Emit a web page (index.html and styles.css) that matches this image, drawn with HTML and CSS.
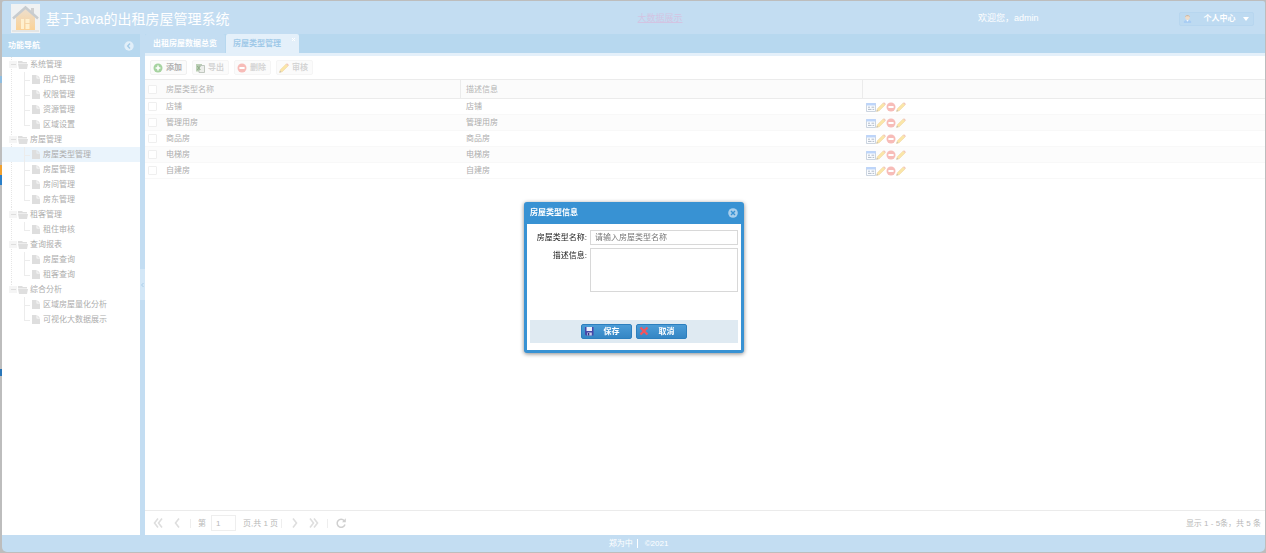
FILE: index.html
```html
<!DOCTYPE html>
<html lang="zh-CN">
<head>
<meta charset="utf-8">
<title>基于Java的出租房屋管理系统</title>
<link rel="stylesheet" href="styles.css">
</head>
<body>
<svg class="defs" aria-hidden="true">
  <defs>
    <symbol id="folder" viewBox="0 0 10 8"><path d="M0 0h4l1 1h4v1.500H0z" fill="#dedede"/><path d="M0 3h10L9 8H1z" fill="#dfdfdf"/></symbol>
    <symbol id="file" viewBox="0 0 8 9"><path d="M0 0h4.600v3.400H8V9H0z" fill="#dedede"/><path d="M5.400.2L7.900 2.700H5.400z" fill="#dedede"/></symbol>
    <symbol id="add" viewBox="0 0 10 10"><circle cx="5" cy="5" r="4.500" fill="#a6d3a0"/><path d="M5 2.600v4.800M2.600 5h4.800" stroke="#fff" stroke-width="1.500"/></symbol>
    <symbol id="remove" viewBox="0 0 10 10"><circle cx="5" cy="5" r="4.500" fill="#f7bcb8"/><path d="M2.400 5h5.200" stroke="#fff" stroke-width="1.800"/></symbol>
    <symbol id="pencil" viewBox="0 0 10 10"><path d="M.5 9.500L1.300 6.800 7.200.9l2 2-6 5.900z" fill="#fbe6a8" stroke="#ecd3a0" stroke-width=".5"/><path d="M7.200.9L8 .2l1.900 1.900-.8.800z" fill="#f3c4b8"/><path d="M.5 9.500l.5-1.700L2.200 9z" fill="#bbb"/></symbol>
    <symbol id="export" viewBox="0 0 10 10"><path d="M1 1h6v7.500H1z" fill="#bcd0b6"/><path d="M4 2.500h5.500v7H4z" fill="#eceeea" stroke="#b4bcb2" stroke-width=".8"/><path d="M2.300 3l3 4M5.300 3l-3 4" stroke="#93b08b" stroke-width="1.200"/></symbol>
    <symbol id="detail" viewBox="0 0 10 10"><path d="M.5 1.500h9v8h-9z" fill="#fafcff" stroke="#bfcad8" stroke-width=".8"/><path d="M.3 1h9.400v2.400H.3z" fill="#bdd5fa"/><path d="M2 5.200h2M2 7.400h3.500M5.500 5.200h2.700M6.500 7.400h1.700" stroke="#a9b3c2" stroke-width=".9"/></symbol>
    <symbol id="left" viewBox="0 0 10 12"><path d="M7 1.500L3.500 6 7 10.500" fill="none" stroke="#dedede" stroke-width="1.600"/></symbol>
    <symbol id="dleft" viewBox="0 0 10 12"><path d="M5 1.500L1.500 6 5 10.500M9 1.500L5.500 6 9 10.500" fill="none" stroke="#dedede" stroke-width="1.600"/></symbol>
    <symbol id="right" viewBox="0 0 10 12"><path d="M3 1.500L6.500 6 3 10.500" fill="none" stroke="#dedede" stroke-width="1.600"/></symbol>
    <symbol id="dright" viewBox="0 0 10 12"><path d="M1 1.500L4.500 6 1 10.500M5 1.500L8.500 6 5 10.500" fill="none" stroke="#dedede" stroke-width="1.600"/></symbol>
  </defs>
</svg>
<div class="app">
  <header class="top">
    <div class="brand">
      <svg class="logo" viewBox="0 0 29 29"><defs><linearGradient id="wall" x2="0" y2="1"><stop stop-color="#ecdfd0"/><stop offset="1" stop-color="#fbd296"/></linearGradient></defs><path d="M0 0h29v29H0z" fill="#f0f2f3"/><path d="M1 26h27v2H1z" fill="#e3e5e5"/><path d="M5 12L14.500 4 24 12v14H5z" fill="url(#wall)"/><path d="M20 4h3v6l-3-3z" fill="#cfd0d1"/><path d="M2 14.500L14.500 3.500 27 14.500" fill="none" stroke="#c8cccf" stroke-width="2.500"/><path d="M10 15h3v10h-3zM14.500 15h4v4h-4zM14.500 20h4v5h-4z" fill="#fff0ce"/></svg>
      <h1>基于Java的出租房屋管理系统</h1>
    </div>
    <a class="bigdata" href="#">大数据展示</a>
    <span class="welcome">欢迎您，admin</span>
    <button class="account" type="button"><svg viewBox="0 0 10 10"><path d="M1 10V8l2.500-1.500h3L9 8v2z" fill="#a9cdf3"/><path d="M3.500 6.500h3L5 8.500z" fill="#f4f8fc"/><circle cx="5" cy="4" r="2.600" fill="#efdcca"/><path d="M2.200 4C2 0 8 0 7.800 4L6.500 2.500h-3z" fill="#cdb8a4"/></svg><span>个人中心</span><i class="caret"></i></button>
  </header>
  <aside class="west">
    <div class="panel-head"><span>功能导航</span><button type="button" aria-label="收起"><svg viewBox="0 0 10 10"><circle cx="5" cy="5" r="4.700" fill="#e1eff9"/><path d="M6 2.600L3.700 5 6 7.400" fill="none" stroke="#a3cbe8" stroke-width="1.400"/></svg></button></div>
    <ul class="tree">
      <li><div class="node"><i class="toggle"></i><svg><use href="#folder"/></svg>系统管理</div>
        <ul><li><svg><use href="#file"/></svg>用户管理</li><li><svg><use href="#file"/></svg>权限管理</li><li><svg><use href="#file"/></svg>资源管理</li><li><svg><use href="#file"/></svg>区域设置</li></ul></li>
      <li><div class="node"><i class="toggle"></i><svg><use href="#folder"/></svg>房屋管理</div>
        <ul><li class="selected"><svg><use href="#file"/></svg>房屋类型管理</li><li><svg><use href="#file"/></svg>房屋管理</li><li><svg><use href="#file"/></svg>房间管理</li><li><svg><use href="#file"/></svg>房东管理</li></ul></li>
      <li><div class="node"><i class="toggle"></i><svg><use href="#folder"/></svg>租客管理</div>
        <ul><li><svg><use href="#file"/></svg>租住审核</li></ul></li>
      <li><div class="node"><i class="toggle"></i><svg><use href="#folder"/></svg>查询报表</div>
        <ul><li><svg><use href="#file"/></svg>房屋查询</li><li><svg><use href="#file"/></svg>租客查询</li></ul></li>
      <li><div class="node"><i class="toggle"></i><svg><use href="#folder"/></svg>综合分析</div>
        <ul><li><svg><use href="#file"/></svg>区域房屋量化分析</li><li><svg><use href="#file"/></svg>可视化大数据展示</li></ul></li>
    </ul>
  </aside>
  <div class="splitter"><button type="button" aria-label="折叠"><svg viewBox="0 0 5 8"><path d="M3.500 2L1.500 4l2 2" fill="none" stroke="#a9cde9"/></svg></button></div>
  <main class="center">
    <nav class="tabs">
      <button class="tab" type="button">出租房屋数据总览</button>
      <button class="tab active" type="button">房屋类型管理<svg viewBox="0 0 5 5"><path d="M1 1l3 3M4 1L1 4" stroke="#fff"/></svg></button>
    </nav>
    <div class="toolbar">
      <button class="enabled" type="button"><svg><use href="#add"/></svg>添加</button>
      <button type="button"><svg><use href="#export"/></svg>导出</button>
      <button type="button"><svg><use href="#remove"/></svg>删除</button>
      <button type="button"><svg><use href="#pencil"/></svg>审核</button>
    </div>
    <div class="grid-wrap">
      <table class="grid">
        <colgroup><col class="c-check"><col class="c-name"><col class="c-desc"><col></colgroup>
        <thead><tr><th><input type="checkbox" aria-label="全选"></th><th>房屋类型名称</th><th class="line">描述信息</th><th class="line"></th></tr></thead>
        <tbody>
          <tr><td><input type="checkbox" aria-label="店铺"></td><td>店铺</td><td>店铺</td><td class="actions"><div><svg><use href="#detail"/></svg><svg><use href="#pencil"/></svg><svg><use href="#remove"/></svg><svg><use href="#pencil"/></svg></div></td></tr>
          <tr><td><input type="checkbox" aria-label="管理用房"></td><td>管理用房</td><td>管理用房</td><td class="actions"><div><svg><use href="#detail"/></svg><svg><use href="#pencil"/></svg><svg><use href="#remove"/></svg><svg><use href="#pencil"/></svg></div></td></tr>
          <tr><td><input type="checkbox" aria-label="商品房"></td><td>商品房</td><td>商品房</td><td class="actions"><div><svg><use href="#detail"/></svg><svg><use href="#pencil"/></svg><svg><use href="#remove"/></svg><svg><use href="#pencil"/></svg></div></td></tr>
          <tr><td><input type="checkbox" aria-label="电梯房"></td><td>电梯房</td><td>电梯房</td><td class="actions"><div><svg><use href="#detail"/></svg><svg><use href="#pencil"/></svg><svg><use href="#remove"/></svg><svg><use href="#pencil"/></svg></div></td></tr>
          <tr><td><input type="checkbox" aria-label="自建房"></td><td>自建房</td><td>自建房</td><td class="actions"><div><svg><use href="#detail"/></svg><svg><use href="#pencil"/></svg><svg><use href="#remove"/></svg><svg><use href="#pencil"/></svg></div></td></tr>
        </tbody>
      </table>
    </div>
    <div class="pager">
      <button type="button" aria-label="首页"><svg><use href="#dleft"/></svg></button>
      <button type="button" aria-label="上一页"><svg><use href="#left"/></svg></button>
      <i class="sep"></i>
      <label for="page">第</label><input id="page" type="text" value="1"><span class="total">页,共 1 页</span>
      <i class="sep"></i>
      <button type="button" aria-label="下一页"><svg><use href="#right"/></svg></button>
      <button type="button" aria-label="末页"><svg><use href="#dright"/></svg></button>
      <i class="sep"></i>
      <button type="button" aria-label="刷新"><svg viewBox="0 0 10 12"><path d="M8.200 3.700A4 4 0 1 0 9 7.500" fill="none" stroke="#d0d0d0" stroke-width="1.500"/><path d="M9.800 1.200v4H6z" fill="#d0d0d0"/></svg></button>
      <span class="range">显示 1 - 5条，共 5 条</span>
    </div>
  </main>
  <footer class="foot"><span>郑为中</span><i></i><span>©2021</span></footer>
</div>
<div class="overlay">
  <form class="dialog" role="dialog" aria-labelledby="dlg-title">
    <div class="dialog-head"><h2 id="dlg-title">房屋类型信息</h2><button type="button" aria-label="关闭"><svg viewBox="0 0 10 10"><circle cx="5" cy="5" r="4.800" fill="#a9cfec"/><path d="M3 3l4 4M7 3L3 7" stroke="#3892d3" stroke-width="1.400"/></svg></button></div>
    <div class="dialog-body">
      <div class="fields">
        <label for="name">房屋类型名称:</label><input id="name" type="text" placeholder="请输入房屋类型名称">
        <label for="desc">描述信息:</label><textarea id="desc"></textarea>
      </div>
      <div class="dialog-foot">
        <button type="button"><svg viewBox="0 0 10 10"><path d="M1 1h8.500v8.500H2L1 8.500z" fill="#4547a8"/><path d="M2.500 1h5.500v4H2.500z" fill="#e9edfb"/><path d="M3.300 6.500h4.500v3H3.300z" fill="#c9cdea"/><path d="M4 7h1.300v2.500H4z" fill="#34357c"/></svg><span>保存</span></button>
        <button type="button"><svg viewBox="0 0 10 10"><path d="M1.500 1.500l7 7M8.500 1.500l-7 7" stroke="#f4545c" stroke-width="2.300"/></svg><span>取消</span></button>
      </div>
    </div>
  </form>
</div>
</body>
</html>
```

FILE: styles.css
```css
* { box-sizing: border-box; }
html, body { height: 100%; }
body {
  margin: 0;
  padding: 1px 1px 1px 2px;
  font: 8px/15px "Liberation Sans", "Noto Sans CJK SC", sans-serif;
  color: #adadad;
  background:
    linear-gradient(#8fbde0, #8fbde0) 0 76px / 2px 7px no-repeat,
    linear-gradient(#f0a030 50%, #2a7fc8 50%) 0 165px / 2px 20px no-repeat,
    linear-gradient(#2a76b8, #2a76b8) 0 369px / 2px 7px no-repeat,
    #bdbdbd;
}
.defs { position: absolute; width: 0; height: 0; }
button, input, textarea { font: inherit; color: inherit; margin: 0; }
button { border: 0; padding: 0; background: none; }
svg { display: block; flex: none; }
ul { list-style: none; margin: 0; padding: 0; }

.app {
  height: 100%;
  display: grid;
  grid-template: 33px minmax(0, 1fr) 17px / 138px 5px minmax(0, 1fr);
  background: #c3ddf2;
  border-radius: 2px 2px 5px 5px;
  overflow: hidden;
}

.top {
  grid-column: 1 / -1;
  display: grid;
  grid-template-columns: 50% 27% 1fr auto;
  align-items: center;
  padding: 2px 11px 0 9px;
  color: #fff;
  font-size: 9px;
}
.brand { display: flex; align-items: center; gap: 6px; }
.logo { width: 29px; height: 29px; }
h1 { margin: 0; font-size: 14px; line-height: 20px; font-weight: 400; }
.bigdata { color: #d3c4e2; padding-left: 5px; text-decoration: underline; }
.welcome { padding-left: 10px; }
.account {
  display: flex;
  align-items: center;
  width: 75px;
  height: 14px;
  padding: 0 4px 0 3px;
  border: 1px solid #b7d6ef;
  border-radius: 2px;
  background: #bddaf1;
  font-size: 8px;
  font-weight: 700;
}
.account svg { width: 9px; height: 9px; }
.account span { flex: 1; padding-left: 4px; text-align: center; }
.caret { border: 3px solid transparent; border-top: 4px solid #fff; border-bottom: 0; }

.west { background: #fff; }
.panel-head {
  display: flex;
  align-items: center;
  justify-content: space-between;
  height: 23px;
  padding: 0 6px;
  background: #b7d8ef;
  color: #fff;
  font-weight: 700;
}
.panel-head svg { width: 10px; height: 10px; }
.tree > li {
  background: repeating-linear-gradient(#e6e6e6 0 1px, transparent 1px 2px) 9px 0 / 1px 100% no-repeat;
}
.tree > li:last-child { background-size: 1px 8px; }
.node { display: flex; align-items: center; height: 15px; padding-left: 7px; }
.node svg { width: 10px; height: 8px; margin: 0 2px 0 1px; }
.toggle { width: 8px; height: 7px; background: linear-gradient(#dedede, #dedede) center / 5px 1px no-repeat #f5f5f5; }
.tree ul li {
  display: flex;
  align-items: center;
  gap: 3px;
  height: 15px;
  padding-left: 30px;
  background:
    linear-gradient(#ececec, #ececec) 22px 0 / 1px 100% no-repeat,
    linear-gradient(#ececec, #ececec) 22px 8px / 6px 1px no-repeat;
}
.tree ul li:last-child { background-size: 1px 8px, 6px 1px; }
.tree ul svg { width: 8px; height: 9px; }
.tree ul .selected { background-color: #eaf4fc; }

.splitter { display: flex; align-items: center; }
.splitter button { width: 5px; height: 31px; background: #d3e7f7; }
.splitter svg { width: 5px; height: 8px; }

.center { display: flex; flex-direction: column; background: #fff; min-width: 0; }
.tabs { display: flex; height: 22px; background: #b7d8ef; border-bottom: 3px solid #e4f0fa; }
.tab { padding: 0 8px; background: #c3ddf2; border-radius: 2px 2px 0 0; color: #fff; font-weight: 700; }
.tab.active { display: flex; align-items: center; gap: 10px; padding: 0 3px 0 7px; margin-left: 1px; background: #e4f0fa; color: #9fc9e8; }
.tab svg { width: 5px; height: 5px; align-self: flex-start; margin-top: 3px; }
.toolbar { display: flex; align-items: center; gap: 5px; padding: 4px 5px; height: 23px; }
.toolbar button {
  display: flex;
  align-items: center;
  gap: 3px;
  height: 15px;
  padding: 0 4px 0 2px;
  border: 1px solid #f5f5f5;
  border-radius: 2px;
  background: #fbfbfb;
  color: #d4d4d4;
  font-weight: 700;
}
.toolbar .enabled { color: #b0b0b0; border-color: #f0f0f0; }
.toolbar svg { width: 10px; height: 10px; }

.grid-wrap { flex: 1; min-height: 0; }
.grid { width: 100%; table-layout: fixed; border-collapse: separate; border-spacing: 0; border-top: 1px solid #ebebeb; }
.c-check { width: 16px; }
.c-name { width: 26.7%; }
.c-desc { width: 35.9%; }
.grid th, .grid td { height: 16px; padding: 0 5px; line-height: 15px; text-align: left; font-weight: 400; border-bottom: 1px solid #f8f8f8; }
.grid th { height: 19px; background: #fbfbfb; border-bottom-color: #ebebeb; color: #b5b5b5; }
.grid .line { border-left: 1px solid #ebebeb; }
.grid th:first-child, .grid td:first-child { padding: 0 3px; }
.grid td:nth-child(3) { padding-left: 6px; }
.grid tbody tr:nth-child(even) { background: #fcfcfc; }
.grid input { display: block; appearance: none; width: 9px; height: 9px; border: 1px solid #efefef; border-radius: 1px; background: #fff; }
.grid .actions { padding-left: 4px; }
.actions div { display: flex; }
.actions svg { width: 10px; height: 10px; }

.pager { display: flex; align-items: center; height: 25px; padding: 0 4px 0 7px; border-top: 1px solid #ebebeb; gap: 7px; color: #b8b8b8; }
.pager svg { width: 12px; height: 12px; }
.pager input { width: 25px; height: 16px; padding: 0 4px; border: 1px solid #eee; background: #fff; margin-left: -2px; }
.sep { width: 1px; height: 9px; background: #eee; }
.total { margin-right: -4px; }
.range { margin-left: auto; }

.foot { grid-column: 1 / -1; display: flex; align-items: center; justify-content: center; gap: 4px; color: #fff; padding-left: 10px; }
.foot i { width: 1px; height: 9px; margin-right: 3px; background: #fff; }

.overlay { position: fixed; inset: 0; padding: 1px 0 0 2px; display: flex; align-items: center; justify-content: center; }
.dialog { width: 220px; padding: 0 3px 3px; border-radius: 3px; background: #3892d3; box-shadow: 0 1px 4px #888; color: #222; }
.dialog-head { display: flex; align-items: center; justify-content: space-between; height: 22px; padding: 0 3px; }
.dialog-head h2 { margin: 0; color: #fff; font-size: 8px; line-height: 15px; }
.dialog-head svg { width: 10px; height: 10px; }
.dialog-body { padding: 6px 3px 7px; background: #fff; }
.fields { display: grid; grid-template-columns: 57px 1fr; column-gap: 3px; row-gap: 3px; margin-bottom: 28px; text-align: right; }
.fields input, .fields textarea { display: block; width: 100%; border: 1px solid #d8d8d8; border-radius: 0; background: #fff; padding: 0 4px; }
.fields input { height: 15px; }
.fields textarea { height: 44px; resize: none; }
.fields ::placeholder { color: #777; opacity: 1; }
.dialog-foot { display: flex; justify-content: center; gap: 4px; padding: 4px 0; background: #dfeaf2; }
.dialog-foot button {
  display: flex;
  align-items: center;
  width: 51px;
  height: 15px;
  padding: 0 2px;
  border: 1px solid #2c7fbe;
  border-radius: 2px;
  background: linear-gradient(#4b9cd7, #3486c4);
  color: #fff;
  font-weight: 700;
  line-height: 13px;
}
.dialog-foot svg { width: 10px; height: 10px; }
.dialog-foot span { flex: 1; text-align: center; }
```
